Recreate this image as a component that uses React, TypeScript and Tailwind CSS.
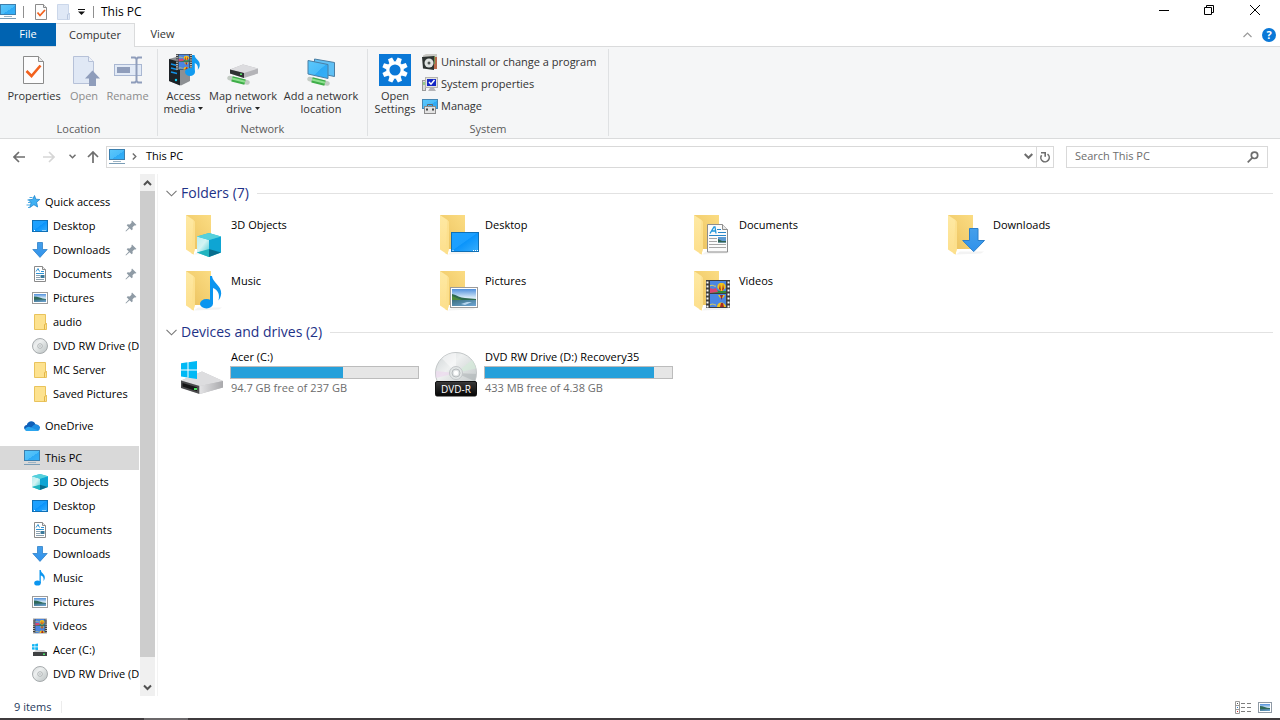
import type { ReactNode } from "react";

type IconProps = { className?: string };

/* ---------- shared gradients ---------- */

function Gradients() {
  return (
    <svg className="absolute size-0" aria-hidden="true">
      <defs>
        <linearGradient id="screen" x1="0" y1="0" x2="1" y2="1">
          <stop offset="0" stopColor="#5cc8fb" />
          <stop offset="0.55" stopColor="#4abcf9" />
          <stop offset="0.56" stopColor="#2eaaf5" />
          <stop offset="1" stopColor="#36b0f7" />
        </linearGradient>
        <linearGradient id="desk" x1="0" y1="0" x2="1" y2="1">
          <stop offset="0" stopColor="#1ea2ff" />
          <stop offset="0.48" stopColor="#1b9fff" />
          <stop offset="0.5" stopColor="#0a94fb" />
          <stop offset="1" stopColor="#38aefd" />
        </linearGradient>
        <linearGradient id="back" x1="0" y1="1" x2="1" y2="0">
          <stop offset="0" stopColor="#e9bf5c" />
          <stop offset="0.5" stopColor="#f3cf70" />
          <stop offset="1" stopColor="#fbdc83" />
        </linearGradient>
        <linearGradient id="flap" x1="0" y1="0" x2="0" y2="1">
          <stop offset="0" stopColor="#fee9a3" />
          <stop offset="1" stopColor="#fddf8c" />
        </linearGradient>
        <linearGradient id="sky" x1="0" y1="0" x2="0" y2="1">
          <stop offset="0" stopColor="#4f8fdc" />
          <stop offset="0.5" stopColor="#d5e9f7" />
        </linearGradient>
        <linearGradient id="water" x1="0" y1="0" x2="1" y2="1">
          <stop offset="0" stopColor="#3b6f7e" />
          <stop offset="1" stopColor="#6fa6d6" />
        </linearGradient>
        <linearGradient id="disc" x1="0" y1="0" x2="1" y2="1">
          <stop offset="0" stopColor="#cfd4d6" />
          <stop offset="0.35" stopColor="#eef0f0" />
          <stop offset="0.6" stopColor="#d9dddd" />
          <stop offset="1" stopColor="#b9bfc1" />
        </linearGradient>
        <linearGradient id="metal" x1="0" y1="0" x2="1" y2="0">
          <stop offset="0" stopColor="#e4e4e6" />
          <stop offset="1" stopColor="#a9a9ac" />
        </linearGradient>
        <linearGradient id="dark" x1="0" y1="0" x2="0" y2="1">
          <stop offset="0" stopColor="#3a3a3a" />
          <stop offset="1" stopColor="#050505" />
        </linearGradient>
        <linearGradient id="cubeL" x1="0" y1="0" x2="1" y2="1">
          <stop offset="0" stopColor="#b8eef0" />
          <stop offset="0.5" stopColor="#d4f4f3" />
          <stop offset="1" stopColor="#57cfd8" />
        </linearGradient>
        <linearGradient id="arrow" x1="0" y1="0" x2="0" y2="1">
          <stop offset="0" stopColor="#459fea" />
          <stop offset="1" stopColor="#2f92ec" />
        </linearGradient>
      </defs>
    </svg>
  );
}

/* ---------- drawings shared by small and large icons ---------- */

function Film() {
  return (
    <>
      <rect width="24" height="28" fill="#3d3d3d" />
      <rect x="4" y="1" width="16" height="12" fill="#4a86e2" />
      <rect x="4" y="14" width="16" height="13" fill="#4a86e2" />
      <path d="M4 11l5-1 5 1 6 0v2H4z" fill="#2f8b3f" />
      <path d="M4 8l3 1 3-1 2 4-8 1z" fill="#d8456f" />
      <path d="M4 6c3-2 4 1 6 0" stroke="#f1d34c" fill="none" />
      <path d="M15.500 3c3 0 4.500 2 4 5l-3 3h-2l-3-3c-.500-3 1-5 4-5z" fill="#f3c51b" />
      <path d="M14 4l-1 5 2 2zM17 4l1 5-2 2z" fill="#a52727" />
      <path d="M12 15h7l-2 3h-3z" fill="#f3c51b" />
      <path d="M14 15h3l-1.500 5z" fill="#8c1f3f" />
      <path d="M11 27c0-6 8-6 9 0z" fill="#f3c51b" />
      <path d="M14 27l1-4h2l1 4z" fill="#a52727" />
      <path d="M4 25c3-2 4 0 6 0" stroke="#f1d34c" fill="none" />
      <path d="M1.500 1.500v26M22.500 1.500v26" stroke="#fff" strokeWidth="2" strokeDasharray="2 2" />
    </>
  );
}

function Photo() {
  return (
    <>
      <rect x="0.500" y="0.500" width="27" height="20" fill="#fff" stroke="#9b9b9b" />
      <rect x="2" y="2" width="24" height="17" fill="url(#sky)" />
      <path d="M2 7c5 1 8 4 13 4l11 1v2H2z" fill="#2f6a4f" />
      <path d="M2 9c4 1 6 3 10 4H2z" fill="#4d8a3c" />
      <rect x="2" y="13" width="24" height="6" fill="url(#water)" />
      <path d="M11 17l6-2 5 0-7 3z" fill="#b6d5ee" />
    </>
  );
}

function Page() {
  return (
    <>
      <path d="M0.500 0.500h15l5 5v22.500H0.500z" fill="#fbfbfb" stroke="#8d8d8d" />
      <path d="M15.500 0.500v5h5" fill="#e8e8e8" stroke="#8d8d8d" />
      <path d="M3 9.500L7 3h1l1 6.500M4.500 7h4" fill="none" stroke="#2196dc" strokeWidth="1.300" />
      <path d="M10 5.500h4M11 8.500h8M2 11.500h17" stroke="#2a86c8" />
      <path d="M2 14.500h8M2 17.500h8M2 20.500h17M2 23.500h17" stroke="#a6a6a6" />
      <rect x="11" y="13" width="8" height="5.500" fill="#5d9ad2" />
      <path d="M11 15l4 2 4 0v1.500h-8z" fill="#2f6150" />
    </>
  );
}

function CubeShape() {
  return (
    <>
      <path d="M0 3.500L12 0l12 3.500v16L12 24 0 19.500z" fill="#2cc0d4" />
      <path d="M0 3.500L12 7v10L0 19.500z" fill="url(#cubeL)" />
      <path d="M24 3.500L12 7v10l12 2.500z" fill="#0ea5d3" />
      <path d="M0 3.500L12 0l12 3.500L12 7z" fill="#55d0dc" />
      <path d="M0 19.500L12 16v8z" fill="#21b4bf" />
      <path d="M24 19.500L12 16v8z" fill="#086e8e" />
    </>
  );
}

/* ---------- small icons (16 x 16) ---------- */

function Small({ className = "", children }: { className?: string; children: ReactNode }) {
  return (
    <svg viewBox="0 0 16 16" className={`size-4 shrink-0 ${className}`} aria-hidden="true">
      {children}
    </svg>
  );
}

const PcIcon = ({ className }: IconProps) => (
  <Small className={className}>
    <rect x="0.500" y="0.500" width="15" height="10" fill="url(#screen)" stroke="#3c7fae" />
    <path d="M4 12.500h8" stroke="#9db4c4" />
    <path d="M0 14.500h16" stroke="#7a9db6" />
  </Small>
);

const StarIcon = () => (
  <Small>
    <path d="M10.500 1.500l1.300 3.700 4 .300-3.200 2.700 1 4.800-3.700-2.300-4.100 2.800 1.300-4.800L4.500 5.800l4.200-.400z" fill="#3fb0f3" stroke="#1f86cf" strokeWidth="0.800" />
    <path d="M5.500 3.500h3M3.500 6h3M4 8.500h3M2.500 11h4M4 13.500h2" stroke="#4aa9e3" />
  </Small>
);

const DesktopIcon = () => (
  <Small>
    <rect x="0.500" y="2.500" width="15" height="11" fill="url(#desk)" stroke="#0f6fb5" />
    <path d="M2 12.500h1M10.500 12.500h1M12.500 12.500h1" stroke="#fff" />
  </Small>
);

const DownIcon = () => (
  <Small>
    <path d="M5.500 .500h5v7h4.700L8 15.400 .800 7.500h4.700z" fill="url(#arrow)" stroke="#2f80c8" strokeWidth="0.800" />
  </Small>
);

const DocIcon = () => (
  <Small>
    <path d="M2.500 .500h8l3 3v12h-11z" fill="#fff" stroke="#8a8a8a" />
    <path d="M10.500 .500v3h3" fill="#eee" stroke="#8a8a8a" />
    <path d="M4 5.500l2-3 1.500 3M9 5.500h3M4 7.500h8" stroke="#2f93d4" fill="none" />
    <path d="M4 9.500h4M4 11.500h4M4 13.500h8" stroke="#8aa1b1" />
    <rect x="8.500" y="9" width="4" height="3" fill="#3c7a9b" />
  </Small>
);

const PicIcon = () => (
  <Small>
    <rect x="0.500" y="2.500" width="15" height="11" fill="#fff" stroke="#9b9b9b" />
    <rect x="2" y="4" width="12" height="8" fill="url(#sky)" />
    <path d="M2 6.500c4 0 7 2 12 2.500V10H2z" fill="#2f6a5a" />
    <rect x="2" y="9.500" width="12" height="2.500" fill="url(#water)" />
  </Small>
);

const FolderIcon = () => (
  <Small>
    <path d="M2.500 .500h11v9h1v6h-12z" fill="#fde28f" stroke="#e9c35c" />
    <path d="M12.500 15.500V10.500l2-1" fill="none" stroke="#e3b548" />
  </Small>
);

const DiscIcon = () => (
  <Small>
    <circle cx="8" cy="8" r="7.500" fill="url(#disc)" stroke="#9ea3a5" strokeWidth="0.900" />
    <circle cx="8" cy="8" r="2.300" fill="#eef0f0" stroke="#a3a8aa" strokeWidth="0.800" />
    <circle cx="8" cy="8" r="0.800" fill="#a3a8aa" />
  </Small>
);

const CloudIcon = () => (
  <Small>
    <path d="M4 12.500C-1 12.500-1 7.500 2.800 7 4 2.500 10 2 11.500 6.500c3-.200 4.500 2 4.400 3.500z" fill="#0f5fb8" />
    <path d="M3.500 13L10 6.800c1-.600 2.200-.300 2.500 0 4.200.300 4.500 6.200.500 6.200z" fill="#1d8ee3" />
    <path d="M.800 11.500C2 9 5 8 7 9.500l7.500 3c-1 .500-2 .500-3 .500H3.500C2.300 13 1.200 12.500.800 11.500z" fill="#2ba5ee" />
  </Small>
);

const CubeIcon = () => (
  <Small>
    <g transform="scale(0.667)">
      <CubeShape />
    </g>
  </Small>
);

const NoteIcon = () => (
  <Small>
    <ellipse cx="5.500" cy="13" rx="3.300" ry="2.600" fill="#0b95ef" />
    <path d="M7.500 0h1.300c.3 3.500 4.500 4 4 8-.2 1.500-.8 2.300-1.300 3 .6-3.200-.6-5-2.700-5.500V13H7.500z" fill="#0b95ef" />
  </Small>
);

const VideoIcon = () => (
  <Small>
    <svg x="1" y="0.500" width="14" height="15" viewBox="0 0 24 28" preserveAspectRatio="none">
      <Film />
    </svg>
  </Small>
);

const DriveIcon = () => (
  <Small>
    <path d="M0 2.300l2.600-.300v2.500H0zM3.200 1.900L6 1.500v3H3.200zM0 5.200h2.600v2.500L0 7.500zM3.200 5.200H6v3l-2.800-.400z" fill="#13b5f4" />
    <path d="M1 10.500l3-2.500H12l3 2.500z" fill="#d2d2d4" />
    <rect x="1" y="10" width="14" height="4" fill="#3f4143" />
    <rect x="11" y="11.500" width="2" height="1.500" fill="#4de36a" />
  </Small>
);

const PinIcon = () => (
  <svg viewBox="0 0 12 12" className="size-3 shrink-0" aria-hidden="true">
    <path d="M7 .500L11.500 5l-1.200.500-1 0-1.800 1.800.200 2-1 1L4.600 8.200 1 11.500l-.500-.5 3.300-3.600L1.700 5.300l1-1 2 .200L6.500 2.700V1.500z" fill="#8f9ba5" />
  </svg>
);

/* ---------- large icons (48 x 48) ---------- */

function BigFolder({ children }: { children: ReactNode }) {
  return (
    <svg viewBox="0 0 48 48" className="size-12 shrink-0" aria-hidden="true">
      <path d="M14 43.500l4-3h24l-3 2z" fill="#f3f3f3" />
      <path d="M6 4h25v34H6z" fill="url(#back)" />
      <path d="M6 4l7.500 5 1.300 2v27L13.500 43.500 6 38.500z" fill="url(#flap)" />
      <path d="M13.500 9l1.300 2v27L13.500 43.500l-2-1z" fill="#fce08d" />
      {children}
    </svg>
  );
}

const Folder3D = () => (
  <BigFolder>
    <g transform="translate(17 22)">
      <CubeShape />
    </g>
  </BigFolder>
);

const FolderDesktop = () => (
  <BigFolder>
    <rect x="17.500" y="21.500" width="27" height="19" fill="url(#desk)" stroke="#0f6fb5" />
    <path d="M18.500 39.500h1M39 39.500h1M41 39.500h1M43 39.500h1" stroke="#fff" />
  </BigFolder>
);

const FolderDocs = () => (
  <BigFolder>
    <g transform="translate(19 13)">
      <Page />
    </g>
  </BigFolder>
);

const FolderDown = () => (
  <BigFolder>
    <path d="M27.500 17.500h8.500v12h6.500L31.700 40.600 20.700 29.500h6.800z" fill="url(#arrow)" stroke="#2b7fca" />
  </BigFolder>
);

const FolderMusic = () => (
  <BigFolder>
    <ellipse cx="26.500" cy="36.800" rx="6.500" ry="4.700" fill="#0b95ef" />
    <path d="M30 9h2c.5 6.500 9.500 9.500 9.200 17.500-.1 2.500-1.200 5-2.700 7 1.700-6.500-1-11-5.500-12.500V37h-3z" fill="#0b95ef" />
  </BigFolder>
);

const FolderPics = () => (
  <BigFolder>
    <g transform="translate(16 20)">
      <Photo />
    </g>
  </BigFolder>
);

const FolderVideo = () => (
  <BigFolder>
    <g transform="translate(18 13)">
      <Film />
    </g>
  </BigFolder>
);

const BigDrive = () => (
  <svg viewBox="0 0 48 48" className="size-12 shrink-0" aria-hidden="true">
    <path d="M1 31.500L22 22.500l21 9.500v6.500L20 45 1 38.500z" fill="#c5c5c8" />
    <path d="M1 31.500L22 22.500l21 9.500L20 37z" fill="#dddddf" />
    <path d="M1 31.500L19.500 37v8L1 39z" fill="#4b4b4d" />
    <path d="M2.500 34l14.500 4.300v4L2.500 37.500z" fill="#161617" />
    <path d="M19.500 37L43 32v6.500L19.500 45z" fill="url(#metal)" />
    <rect x="14" y="39" width="3" height="2" fill="#48e25c" />
    <path d="M1 14.300l6.500-1v7.200H1zM8.500 13.200l8.500-1.200v8.500H8.500zM1 21.500h6.500v7L1 27.500zM8.500 21.500H17V30l-8.500-1.200z" fill="#00b9f5" />
  </svg>
);

const BigDisc = () => (
  <svg viewBox="0 0 48 48" className="size-12 shrink-0" aria-hidden="true">
    <circle cx="22" cy="24" r="20.500" fill="url(#disc)" stroke="#c3c7c8" />
    <path d="M22 24L8 9.500C12 5.500 17 3.800 22 4z" fill="#ffffff" opacity="0.450" />
    <path d="M22 24L1.800 22c-.2 2-.1 4 .4 7z" fill="#edd6ee" opacity="0.600" />
    <path d="M22 24L38 11c2 2.500 3.500 5.500 4 8.500z" fill="#d3ecd8" opacity="0.600" />
    <path d="M22 24l20 1c0 3-.6 5-1.500 7z" fill="#a9afb1" opacity="0.500" />
    <circle cx="22" cy="24" r="6.500" fill="#e2e6e6" stroke="#c3c7c9" />
    <circle cx="22" cy="24" r="4" fill="none" stroke="#b7bcbe" />
    <circle cx="22" cy="24" r="2.200" fill="#fff" />
    <rect x="1.500" y="32.500" width="41" height="14.500" rx="1.500" fill="url(#dark)" stroke="#111" />
    <text x="22" y="43.500" textAnchor="middle" fontSize="10" fill="#fff">
      DVD-R
    </text>
  </svg>
);

/* ---------- ribbon icons (32 x 32) ---------- */

function Ribbon({ children }: { children: ReactNode }) {
  return (
    <svg viewBox="0 0 32 32" className="size-8 shrink-0" aria-hidden="true">
      {children}
    </svg>
  );
}

const PropertiesIcon = () => (
  <Ribbon>
    <path d="M5.500 2.500h15l5 5v22h-20z" fill="#fcfcfd" stroke="#8b8b8b" />
    <path d="M20.500 2.500v5h5" fill="#e9e9e9" stroke="#8b8b8b" />
    <path d="M8.500 17l5 5 9-10.500" fill="none" stroke="#f2611d" strokeWidth="2.600" />
  </Ribbon>
);

const OpenIcon = () => (
  <Ribbon>
    <path d="M5.500 2.500h15l5 5v22h-20z" fill="#e0e8f5" stroke="#b6c1d8" />
    <path d="M20.500 2.500v5h5" fill="#edf1f8" stroke="#b6c1d8" />
    <path d="M24.500 16.500L32 24.500h-4V32h-7v-7.500h-4z" fill="#8f9dbb" />
  </Ribbon>
);

const RenameIcon = () => (
  <Ribbon>
    <rect x="2.500" y="10.500" width="27" height="11" fill="#e2eaf6" stroke="#a9b7d2" />
    <rect x="5" y="13" width="13" height="6" fill="#8f9dbb" />
    <path d="M19 3.500h4l1.500 1.500L26 3.500h4M24.500 4v24M19 28.500h4l1.500-1.500 1.500 1.500h4" fill="none" stroke="#8f9dbb" strokeWidth="2" />
  </Ribbon>
);

const MediaIcon = () => (
  <Ribbon>
    <path d="M1 5l9-2.500 12 3V27l-9 4.500L1 27z" fill="#8d9093" />
    <path d="M1 5l11 3v23.500L1 27z" fill="#1d2226" />
    <path d="M3 10l6 1.500M3 14l6 1.500M3 18l6 1.500" stroke="#1392e8" strokeWidth="1.500" />
    <circle cx="8" cy="26" r="1.200" fill="#1bd0f2" />
    <svg x="8" y="0" width="16" height="16" viewBox="0 0 24 28" preserveAspectRatio="none">
      <Film />
    </svg>
    <ellipse cx="22" cy="18" rx="5" ry="4" fill="#129bf0" />
    <path d="M24 1h2.500c.5 4.500 5.500 5 5.300 10-.1 2-1 3.500-2 5 .7-4-.8-6-3-7v9H24z" fill="#129bf0" />
  </Ribbon>
);

const GreenPipe = () => (
  <>
    <path d="M2.500 24l18 4.500" stroke="#c3cbc4" strokeWidth="4.500" strokeLinecap="round" />
    <path d="M5 24.800l13 3.300" stroke="#3fae49" strokeWidth="5.500" />
    <path d="M5 24.500l13 3.300" stroke="#8ee08f" strokeWidth="2" />
  </>
);

const MapDriveIcon = () => (
  <Ribbon>
    <GreenPipe />
    <path d="M3 15.500l13-5 15 4v5l-14 4.500L3 19.500z" fill="#b4b4b8" />
    <path d="M3 15.500l13-5 15 4-14 4.500z" fill="#dcdcdf" />
    <path d="M3 15.500l14 3.500v5L3 19.500z" fill="#303234" />
    <rect x="13" y="19.500" width="2" height="1.500" fill="#54e064" />
  </Ribbon>
);

const AddLocationIcon = () => (
  <Ribbon>
    <g transform="translate(2 1)">
      <GreenPipe />
    </g>
    <path d="M9.500 5l20 3.500v14l-20-4z" fill="#5fc0f5" stroke="#4a7ea3" />
    <path d="M3 6.500l20 4V24.500L3 20z" fill="url(#screen)" stroke="#4a7ea3" />
  </Ribbon>
);

const GEAR_TEETH = [0, 45, 90, 135, 180, 225, 270, 315];

const SettingsIcon = () => (
  <Ribbon>
    <rect width="32" height="32" fill="#0a78d7" />
    {GEAR_TEETH.map((angle) => (
      <path key={angle} d="M13.300 8L13.800 3.300h4.400l.5 4.700z" fill="#fff" transform={`rotate(${angle + 22} 16 16)`} />
    ))}
    <circle cx="16" cy="16" r="7.200" fill="none" stroke="#fff" strokeWidth="3.200" />
  </Ribbon>
);

const UninstallIcon = () => (
  <Small>
    <path d="M1 1.500L4 0h11v3H1z" fill="#c9c9c5" />
    <rect x="12" y="3" width="3" height="12" fill="#b86a4c" />
    <rect x="11" y="2" width="2" height="8" fill="#70904b" />
    <path d="M0 3l12-1v14L1 14.500z" fill="#2d3331" />
    <circle cx="7" cy="9" r="4.500" fill="#dfe3e1" />
    <circle cx="7" cy="9" r="1.500" fill="#505654" />
  </Small>
);

const SysPropsIcon = () => (
  <Small>
    <rect x="0.500" y="4.500" width="3" height="10" fill="#d9d9d9" stroke="#9a9a9a" />
    <path d="M2 6v3" stroke="#4fc13c" />
    <rect x="3.500" y="1.500" width="12" height="10" fill="#e4e4e0" stroke="#b4b4b0" />
    <rect x="5" y="3" width="9" height="7" fill="#1427c4" />
    <path d="M7 6l2 2.200L12.500 4" fill="none" stroke="#fff" strokeWidth="1.500" />
    <path d="M8 12h4l2 3H6z" fill="#b5b5b8" />
  </Small>
);

const ManageIcon = () => (
  <Small>
    <rect x="0.500" y="1.500" width="15" height="9" fill="url(#screen)" stroke="#4586b3" />
    <path d="M5.500 8.500v-2h5v2" fill="none" stroke="#666" />
    <rect x="2.500" y="8.500" width="11" height="7" fill="#e3e3e3" stroke="#8c8c8c" />
    <path d="M4 11.500h2M10 11.500h2" stroke="#444" strokeWidth="2" />
  </Small>
);

/* ---------- data ---------- */

type NavEntry = { label: string; icon: ReactNode; pinned?: boolean };

const quickAccess: NavEntry[] = [
  { label: "Desktop", icon: <DesktopIcon />, pinned: true },
  { label: "Downloads", icon: <DownIcon />, pinned: true },
  { label: "Documents", icon: <DocIcon />, pinned: true },
  { label: "Pictures", icon: <PicIcon />, pinned: true },
  { label: "audio", icon: <FolderIcon /> },
  { label: "DVD RW Drive (D:) Recovery35", icon: <DiscIcon /> },
  { label: "MC Server", icon: <FolderIcon /> },
  { label: "Saved Pictures", icon: <FolderIcon /> },
];

const thisPc: NavEntry[] = [
  { label: "3D Objects", icon: <CubeIcon /> },
  { label: "Desktop", icon: <DesktopIcon /> },
  { label: "Documents", icon: <DocIcon /> },
  { label: "Downloads", icon: <DownIcon /> },
  { label: "Music", icon: <NoteIcon /> },
  { label: "Pictures", icon: <PicIcon /> },
  { label: "Videos", icon: <VideoIcon /> },
  { label: "Acer (C:)", icon: <DriveIcon /> },
  { label: "DVD RW Drive (D:) Recovery35", icon: <DiscIcon /> },
];

const folders = [
  { label: "3D Objects", icon: <Folder3D /> },
  { label: "Desktop", icon: <FolderDesktop /> },
  { label: "Documents", icon: <FolderDocs /> },
  { label: "Downloads", icon: <FolderDown /> },
  { label: "Music", icon: <FolderMusic /> },
  { label: "Pictures", icon: <FolderPics /> },
  { label: "Videos", icon: <FolderVideo /> },
];

const drives = [
  { label: "Acer (C:)", free: "94.7 GB free of 237 GB", used: 60, icon: <BigDrive /> },
  { label: "DVD RW Drive (D:) Recovery35", free: "433 MB free of 4.38 GB", used: 90.4, icon: <BigDisc /> },
];

const systemCommands = [
  { label: "Uninstall or change a program", icon: <UninstallIcon /> },
  { label: "System properties", icon: <SysPropsIcon /> },
  { label: "Manage", icon: <ManageIcon /> },
];

/* ---------- pieces ---------- */

function NavRoot({ label, icon, selected }: { label: string; icon: ReactNode; selected?: boolean }) {
  return (
    <a href="#" className={`flex h-6 items-center gap-[5px] pl-6 whitespace-nowrap ${selected ? "bg-[#d9d9d9]" : ""}`}>
      {icon}
      {label}
    </a>
  );
}

function NavList({ entries }: { entries: NavEntry[] }) {
  return (
    <ul>
      {entries.map((entry) => (
        <li key={entry.label}>
          <a href="#" className="flex h-6 items-center gap-[5px] pr-[2px] pl-8 whitespace-nowrap">
            {entry.icon}
            <span className="flex-1">{entry.label}</span>
            {entry.pinned && <PinIcon />}
          </a>
        </li>
      ))}
    </ul>
  );
}

function RibbonButton({ icon, lines, menu, disabled }: { icon: ReactNode; lines: string[]; menu?: boolean; disabled?: boolean }) {
  return (
    <button
      type="button"
      disabled={disabled}
      className={`flex flex-col items-center leading-[13px] whitespace-nowrap ${disabled ? "text-[#8b8b8b]" : "text-[#333]"}`}
    >
      {icon}
      <span className="mt-[3px]">{lines[0]}</span>
      {lines[1] && (
        <span className="flex items-center gap-[3px]">
          {lines[1]}
          {menu && (
            <svg viewBox="0 0 5 3" className="h-[3px] w-[5px]" aria-hidden="true">
              <path d="M0 0h5L2.500 3z" fill="#222" />
            </svg>
          )}
        </span>
      )}
    </button>
  );
}

function RibbonGroup({ title, children }: { title: string; children: ReactNode }) {
  return (
    <section aria-label={title} className="flex flex-col justify-between border-r border-[#dfe1e3]">
      {children}
      <h2 className="text-center leading-[14px] text-[#5a5a5a]">{title}</h2>
    </section>
  );
}

function SectionHeader({ title }: { title: string }) {
  return (
    <h2 className="flex h-5 items-center text-sm text-[#1e3287]">
      <svg viewBox="0 0 11 7" className="mr-1 h-[7px] w-[11px] shrink-0" aria-hidden="true">
        <path d="M.500 .800l5 5 5-5" fill="none" stroke="#777" strokeWidth="1.100" />
      </svg>
      {title}
      <span className="ml-2 h-px flex-1 bg-[#e2e2e2]" />
    </h2>
  );
}

export default function App() {
  return (
    <div className="flex min-h-screen flex-col bg-white font-['Open_Sans','Noto_Sans',sans-serif] text-[11px] text-black">
      <Gradients />

      {/* title bar */}
      <header className="flex h-[23px] items-center">
        <PcIcon />
        <span className="ml-[7px] h-3 w-px bg-[#8f8f8f]" />
        <button type="button" aria-label="Properties" className="ml-[9px]">
          <Small>
            <path d="M2.500 .500h8l3 3v12h-11z" fill="#fcfcfc" stroke="#8b8b8b" />
            <path d="M10.500 .500v3h3" fill="#e9e9e9" stroke="#8b8b8b" />
            <path d="M4.500 8.500l2.500 3L12 6" fill="none" stroke="#f2611d" strokeWidth="1.800" />
          </Small>
        </button>
        <button type="button" aria-label="New folder" className="ml-[6px]">
          <Small>
            <path d="M2.500 .500h11v9h1v6h-12z" fill="#dfe8f6" stroke="#cbd7ea" />
            <path d="M12.500 15.500V10.500l2-1" fill="none" stroke="#b9c7df" />
          </Small>
        </button>
        <button type="button" aria-label="Customize toolbar" className="ml-[7px]">
          <svg viewBox="0 0 7 6" className="h-[6px] w-[7px]" aria-hidden="true">
            <path d="M0 .500h7" stroke="#111" />
            <path d="M0 2.500h7L3.500 6z" fill="#111" />
          </svg>
        </button>
        <span className="ml-2 h-3 w-px bg-[#8f8f8f]" />
        <h1 className="ml-[7px] text-[12px]">This PC</h1>
        <div className="ml-auto flex h-5 items-center self-start pr-5">
          <button type="button" aria-label="Minimize">
            <svg viewBox="0 0 10 10" className="size-[10px]" aria-hidden="true">
              <path d="M0 5.500h10" stroke="#000" />
            </svg>
          </button>
          <button type="button" aria-label="Restore" className="ml-[35px]">
            <svg viewBox="0 0 10 10" className="size-[10px]" fill="none" stroke="#000" aria-hidden="true">
              <path d="M.500 2.500h7v7h-7zM2.500 2.500v-2h7v7h-2" />
            </svg>
          </button>
          <button type="button" aria-label="Close" className="ml-[36px]">
            <svg viewBox="0 0 10 10" className="size-[10px]" stroke="#000" aria-hidden="true">
              <path d="M0 0l10 10M10 0L0 10" />
            </svg>
          </button>
        </div>
      </header>

      {/* ribbon tabs */}
      <div className="flex h-6 border-b border-[#dadbdc]">
        <button type="button" className="w-14 bg-[#0063b1] text-white">
          File
        </button>
        <button type="button" className="-mb-px w-[79px] border-t border-r border-[#dadbdc] bg-[#f5f6f7] text-[#333]">
          Computer
        </button>
        <button type="button" className="w-[55px] text-[#333]">
          View
        </button>
        <div className="ml-auto flex items-center pr-1">
          <button type="button" aria-label="Collapse ribbon">
            <svg viewBox="0 0 9 6" className="h-[6px] w-[9px]" aria-hidden="true">
              <path d="M.500 5l4-4 4 4" fill="none" stroke="#9a9a9a" strokeWidth="1.200" />
            </svg>
          </button>
          <button type="button" aria-label="Help" className="ml-[10px] size-[14px] rounded-full bg-[#0a78d7] text-center leading-[14px] font-bold text-white">
            ?
          </button>
        </div>
      </div>

      {/* ribbon */}
      <div className="flex h-[92px] border-b border-[#dadbdc] bg-[#f5f6f7] py-[2px]">
        <RibbonGroup title="Location">
          <div className="grid grid-cols-[60px_40px_47px] pt-[5px] pr-[6px] pl-1">
            <RibbonButton icon={<PropertiesIcon />} lines={["Properties"]} />
            <RibbonButton icon={<OpenIcon />} lines={["Open"]} disabled />
            <RibbonButton icon={<RenameIcon />} lines={["Rename"]} disabled />
          </div>
        </RibbonGroup>
        <RibbonGroup title="Network">
          <div className="grid grid-cols-[43px_76px_80px] pt-[5px] pr-[6px] pl-1">
            <RibbonButton icon={<MediaIcon />} lines={["Access", "media"]} menu />
            <RibbonButton icon={<MapDriveIcon />} lines={["Map network", "drive"]} menu />
            <RibbonButton icon={<AddLocationIcon />} lines={["Add a network", "location"]} />
          </div>
        </RibbonGroup>
        <RibbonGroup title="System">
          <div className="flex pr-2 pl-1">
            <div className="grid w-[46px] justify-center pt-[5px]">
              <RibbonButton icon={<SettingsIcon />} lines={["Open", "Settings"]} />
            </div>
            <ul className="ml-1 w-[178px] pt-[2px] text-[#333]">
              {systemCommands.map((command) => (
                <li key={command.label}>
                  <button type="button" className="flex h-[22px] items-center gap-[3px] whitespace-nowrap">
                    {command.icon}
                    {command.label}
                  </button>
                </li>
              ))}
            </ul>
          </div>
        </RibbonGroup>
      </div>

      {/* address row */}
      <div className="flex h-[35px] items-center pr-3 pl-[13px]">
        <button type="button" aria-label="Back">
          <svg viewBox="0 0 12 12" className="size-3" fill="none" stroke="#6e6e6e" strokeWidth="1.700" aria-hidden="true">
            <path d="M12 6H1M6 1L1 6l5 5" />
          </svg>
        </button>
        <button type="button" aria-label="Forward" className="ml-[18px]" disabled>
          <svg viewBox="0 0 12 12" className="size-3" fill="none" stroke="#d6d6d6" strokeWidth="1.700" aria-hidden="true">
            <path d="M0 6h11M6 1l5 5-5 5" />
          </svg>
        </button>
        <button type="button" aria-label="Recent locations" className="ml-[14px]">
          <svg viewBox="0 0 7 5" className="h-[5px] w-[7px]" fill="none" stroke="#6e6e6e" strokeWidth="1.500" aria-hidden="true">
            <path d="M.500 .800l3 3 3-3" />
          </svg>
        </button>
        <button type="button" aria-label="Up" className="ml-[11px]">
          <svg viewBox="0 0 12 12" className="size-3" fill="none" stroke="#6e6e6e" strokeWidth="1.700" aria-hidden="true">
            <path d="M6 12V1M1 6l5-5 5 5" />
          </svg>
        </button>
        <div className="ml-[7px] flex h-[22px] flex-1 items-center border border-[#d9d9d9] pl-[2px]">
          <PcIcon />
          <svg viewBox="0 0 5 7" className="ml-[7px] h-[7px] w-[5px]" fill="none" stroke="#6e6e6e" strokeWidth="1.400" aria-hidden="true">
            <path d="M.800 .500l3 3-3 3" />
          </svg>
          <a href="#" className="ml-[9px]">
            This PC
          </a>
          <button type="button" aria-label="Previous locations" className="mr-[3px] ml-auto">
            <svg viewBox="0 0 9 7" className="h-[7px] w-[9px]" fill="none" stroke="#6e6e6e" strokeWidth="2" aria-hidden="true">
              <path d="M.700 1l3.800 3.800L8.300 1" />
            </svg>
          </button>
          <button type="button" aria-label="Refresh" className="flex h-full w-[17px] items-center justify-center border-l border-[#d9d9d9]">
            <svg viewBox="0 0 12 12" className="size-3" fill="none" stroke="#6e6e6e" strokeWidth="1.600" aria-hidden="true">
              <path d="M8.500 3.200A4.200 4.200 0 1 1 2.600 4.200M2 1.800h4.200v4" />
            </svg>
          </button>
        </div>
        <label className="ml-3 flex h-[22px] w-[202px] items-center border border-[#d9d9d9] px-2">
          <input type="text" placeholder="Search This PC" aria-label="Search This PC" className="w-full min-w-0 outline-none placeholder:text-[#6d6d6d]" />
          <svg viewBox="0 0 12 12" className="size-3 shrink-0" fill="none" stroke="#6e6e6e" strokeWidth="1.700" aria-hidden="true">
            <circle cx="7.500" cy="4.300" r="3.200" />
            <path d="M5.200 6.800L.700 11.300" />
          </svg>
        </label>
      </div>

      {/* body */}
      <div className="flex flex-1">
        <nav aria-label="Folders" className="w-[139px] overflow-hidden pt-4 pb-[10px]">
          <NavRoot label="Quick access" icon={<StarIcon />} />
          <NavList entries={quickAccess} />
          <div className="my-2">
            <NavRoot label="OneDrive" icon={<CloudIcon />} />
          </div>
          <NavRoot label="This PC" icon={<PcIcon />} selected />
          <NavList entries={thisPc} />
        </nav>
        <div className="ml-px flex w-[15px] flex-col bg-[#f0f0f0]" aria-hidden="true">
          <svg viewBox="0 0 15 17" className="h-[17px] w-[15px]" fill="none" stroke="#505050" strokeWidth="2">
            <path d="M4 11l3.500-3.500L11 11" />
          </svg>
          <div className="flex-1 bg-[#cdcdcd]" />
          <div className="h-[22px]" />
          <svg viewBox="0 0 15 17" className="h-[17px] w-[15px]" fill="none" stroke="#505050" strokeWidth="2">
            <path d="M4 6.500L7.500 10 11 6.500" />
          </svg>
        </div>
        <main className="ml-[2px] flex-1 border-l border-[#f3f3f3] pt-[9px] pr-[7px] pl-2">
          <SectionHeader title="Folders (7)" />
          <ul className="mt-1 grid grid-cols-[repeat(auto-fill,254px)] pl-[14px]">
            {folders.map((folder) => (
              <li key={folder.label} className="h-14 pt-1">
                <a href="#" className="flex">
                  {folder.icon}
                  <span className="ml-[3px] pt-[6px] leading-4">{folder.label}</span>
                </a>
              </li>
            ))}
          </ul>
          <div className="mt-[3px]">
            <SectionHeader title="Devices and drives (2)" />
          </div>
          <ul className="mt-[7px] grid grid-cols-[repeat(auto-fill,254px)] pl-[14px]">
            {drives.map((drive) => (
              <li key={drive.label}>
                <a href="#" className="flex">
                  {drive.icon}
                  <div className="ml-[2px] w-[189px] leading-4 whitespace-nowrap">
                    <div className="pl-px">{drive.label}</div>
                    <div
                      role="progressbar"
                      aria-label={`${drive.label} space used`}
                      aria-valuenow={drive.used}
                      className="mt-px h-[13px] border border-[#bcbcbc] bg-[#e6e6e6]"
                    >
                      <div className="h-full bg-[#26a0da]" style={{ width: `${drive.used}%` }} />
                    </div>
                    <div className="mt-px pl-px text-[#6d6d6d]">{drive.free}</div>
                  </div>
                </a>
              </li>
            ))}
          </ul>
        </main>
      </div>

      {/* status bar */}
      <footer className="flex h-[22px] items-center pr-2 pl-[14px] text-[#1e395b]">
        <span className="pt-px">9 items</span>
        <span className="ml-[10px] h-3 w-px bg-[#ececec]" />
        <div className="ml-auto flex gap-[6px]">
          <button type="button" aria-label="Details view">
            <svg viewBox="0 0 17 13" className="h-[13px] w-[17px]" fill="none" aria-hidden="true">
              <path d="M.500 .500h4v12h-4zM.500 4.500h4M.500 8.500h4" stroke="#9a9a9a" />
              <path d="M6 2.500h4M12 2.500h4M6 6.500h4M12 6.500h4M6 10.500h4M12 10.500h4" stroke="#7e7e7e" />
              <path d="M2 6.500h1" stroke="#2c7fd0" />
              <path d="M2 10.500h1" stroke="#d02c2c" />
              <path d="M2 2.500h1" stroke="#555" />
            </svg>
          </button>
          <button type="button" aria-label="Large icons view">
            <svg viewBox="0 0 14 11" className="h-[11px] w-[14px]" aria-hidden="true">
              <rect x="0.500" y="0.500" width="13" height="10" fill="#fff" stroke="#8f9aa5" />
              <rect x="2" y="2" width="10" height="7" fill="url(#sky)" />
              <path d="M2 4c3 0 6 2 10 2v1H2z" fill="#2f6a5a" />
              <rect x="2" y="7" width="10" height="2" fill="url(#water)" />
            </svg>
          </button>
        </div>
      </footer>
      <div className="flex h-[2px] bg-[#3f3b3d]">
        <span className="ml-36 w-11 bg-[#6b686a]" />
      </div>
    </div>
  );
}
